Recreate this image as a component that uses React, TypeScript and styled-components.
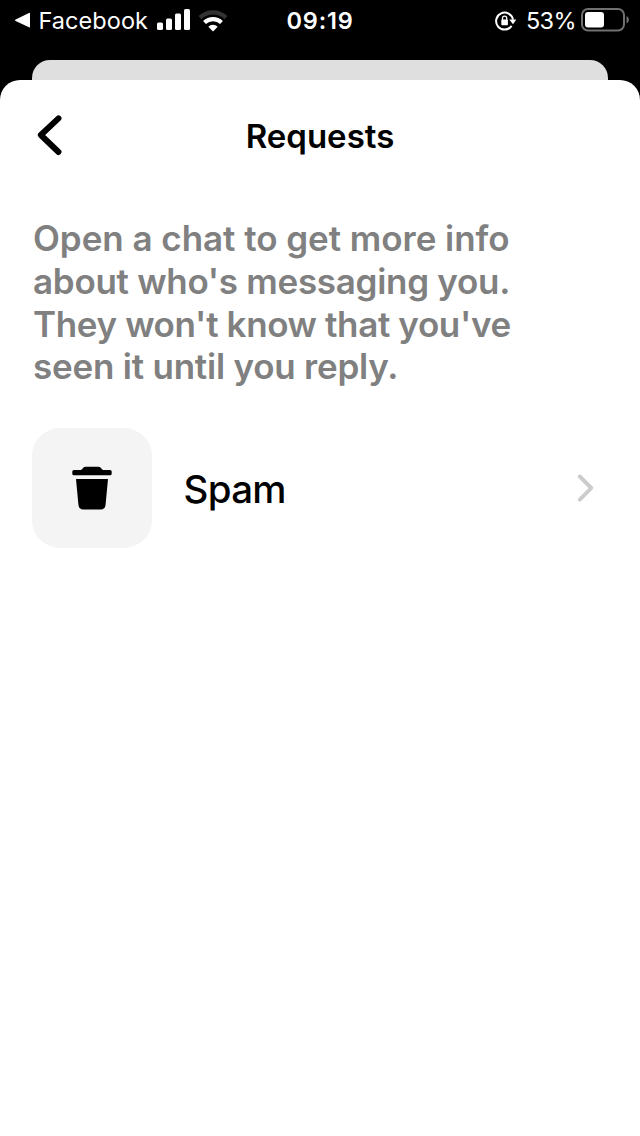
import React from "react";
import styled, { createGlobalStyle } from "styled-components";

const GlobalStyle = createGlobalStyle`
  * { box-sizing: border-box; }
  body { margin: 0; background: #000; font-family: Inter, "Liberation Sans", sans-serif; }
  svg { display: block; flex: none; }
`;

const Screen = styled.div`
  width: 640px;
  height: 1136px;
  display: flex;
  flex-direction: column;
  background: #000;
  overflow: hidden;
`;

const StatusBar = styled.header`
  height: 40px;
  flex: none;
  display: grid;
  grid-template-columns: 1fr auto 1fr;
  align-items: center;
  padding: 0 11px 0 14px;
  color: #fff;
`;

const StatusGroup = styled.div<{ $end?: boolean }>`
  display: flex;
  align-items: center;
  justify-content: ${(p) => (p.$end ? "flex-end" : "flex-start")};
`;

const StatusText = styled.span<{ $weight?: number; $spacing?: number; $margin?: string }>`
  font-size: 23.5px;
  line-height: 38px;
  padding-top: 2px;
  font-weight: ${(p) => p.$weight ?? 400};
  letter-spacing: ${(p) => p.$spacing ?? 0}px;
  margin: ${(p) => p.$margin ?? "0"};
  white-space: nowrap;
`;

const StatusIconSlot = styled.div<{ $left?: number }>`
  margin-left: ${(p) => p.$left ?? 0}px;
  padding-top: 1px;
`;

const PreviousSheet = styled.div`
  height: 20px;
  flex: none;
  margin: 20px 32px 0;
  border-radius: 18px 18px 0 0;
  background: #dfdfdf;
`;

const Sheet = styled.main`
  flex: 1;
  background: #fff;
  border-radius: 20px 20px 0 0;
  padding: 0 32px;
`;

const TitleBar = styled.div`
  height: 112px;
  display: grid;
  grid-template-columns: 48px 1fr 48px;
  align-items: center;
`;

const IconButton = styled.button`
  border: 0;
  padding: 0;
  background: none;
  width: 40px;
  height: 48px;
`;

const Title = styled.h1`
  margin: 0;
  text-align: center;
  font-size: 33px;
  line-height: 40px;
  font-weight: 600;
  letter-spacing: 0;
  color: #000;
`;

const Notice = styled.p`
  margin: 25px 0 0 1px;
  height: 172px;
  font-size: 35px;
  line-height: 42.8px;
  font-weight: 600;
  color: #808080;
`;

const Line = styled.span<{ $spacing: number }>`
  display: block;
  white-space: nowrap;
  letter-spacing: ${(p) => p.$spacing}px;
`;

const Row = styled.div`
  margin-top: 39px;
  height: 120px;
  display: flex;
  align-items: center;
  padding-right: 12px;
`;

const Tile = styled.div`
  width: 120px;
  height: 120px;
  border-radius: 28px;
  background: #f4f4f4;
  display: flex;
  align-items: center;
  justify-content: center;
`;

const RowLabel = styled.span`
  flex: 1;
  margin-left: 31.5px;
  padding-top: 1px;
  font-size: 38.5px;
  line-height: 48px;
  font-weight: 500;
  letter-spacing: -0.7px;
  color: #000;
`;

const BackTriangle = () => (
  <svg width="17" height="16" viewBox="0 0 17 16">
    <path d="M16 1.4v13.400q0 1-1 .5L1.600 8.900q-1.300-.7 0-1.400L15 .9q1-.5 1 .5z" fill="#fff" />
  </svg>
);

const Signal = () => (
  <svg width="34" height="22" viewBox="0 0 34 22" fill="#fff">
    <rect x="0" y="13.5" width="6" height="7.5" rx="1.5" />
    <rect x="9" y="9.5" width="6" height="11.5" rx="1.5" />
    <rect x="18" y="4.5" width="6" height="16.5" rx="1.5" />
    <rect x="27" y="0" width="6" height="21" rx="1.5" />
  </svg>
);

const Wifi = () => (
  <svg width="30" height="22" viewBox="0 0 30 22" fill="none">
    <path d="M2 7.600A19 19 0 0 1 28 7.600" stroke="#333" strokeWidth="4.200" />
    <path d="M6.500 12.500A12.400 12.400 0 0 1 23.500 12.500" stroke="#fff" strokeWidth="4.200" />
    <path d="M15 21.500l-4.700-4.700a6.600 6.600 0 0 1 9.400 0z" fill="#fff" />
  </svg>
);

const RotationLock = () => (
  <svg width="22" height="20" viewBox="0 0 22 20" fill="none">
    <path d="M16.600 14.900A8.500 8.500 0 1 1 18 8.700" stroke="#fff" strokeWidth="2" />
    <path d="M14.300 8.500h7L18 13.300z" fill="#fff" />
    <rect x="6.300" y="8.400" width="6.600" height="5.800" rx=".7" fill="#fff" />
    <path d="M7.500 9V7.300a2.100 2.100 0 0 1 4.200 0V9" stroke="#fff" strokeWidth="1.300" />
  </svg>
);

const Battery = () => (
  <svg width="48" height="24" viewBox="0 0 48 24" fill="none">
    <rect x="1" y="1" width="42" height="21.5" rx="6" stroke="#707070" strokeWidth="2" />
    <rect x="4" y="4" width="19" height="15.5" rx="3" fill="#fff" />
    <path d="M45.5 8q2.5 1.2 2.5 3.8t-2.5 3.8z" fill="#707070" />
  </svg>
);

const BackChevron = () => (
  <svg width="40" height="48" viewBox="0 0 40 48" fill="none">
    <path d="M26.500 6.300L8.800 23L26.500 40" stroke="#000" strokeWidth="5.900" strokeLinecap="round" strokeLinejoin="round" />
  </svg>
);

const Trash = () => (
  <svg width="40" height="44" viewBox="0 0 40 44" fill="#000">
    <path d="M2 4h6.500Q10 4 11 2Q12 .7 14 .7h12Q28 .7 29 2Q30 4 31.500 4H38Q39.700 4 39.700 5.500V7.700Q39.700 9.300 38 9.300H2Q.3 9.300 .3 7.700V5.500Q.3 4 2 4z" />
    <path d="M4 13h32l-2.400 25.500Q33.200 43.500 28.500 43.500h-17Q6.800 43.500 6.400 38.500z" />
  </svg>
);

const Disclosure = () => (
  <svg width="20" height="30" viewBox="0 0 20 30" fill="none">
    <path d="M3.800 3.500L15.300 15L3.800 26.700" stroke="#ccc" strokeWidth="3.900" strokeLinecap="round" strokeLinejoin="round" />
  </svg>
);

const noticeLines = [
  { text: "Open a chat to get more info", spacing: -0.04 },
  { text: "about who's messaging you.", spacing: -0.28 },
  { text: "They won't know that you've", spacing: -0.37 },
  { text: "seen it until you reply.", spacing: -0.22 },
];

export default function App() {
  return (
    <>
      <GlobalStyle />
      <Screen>
        <StatusBar>
          <StatusGroup>
            <BackTriangle />
            <StatusText $margin="0 8.5px 0 7.5px" $spacing={0.05}>Facebook</StatusText>
            <Signal />
            <StatusIconSlot $left={7.5}><Wifi /></StatusIconSlot>
          </StatusGroup>
          <StatusText $weight={600} $spacing={0.8} $margin="0 3px 0 0">09:19</StatusText>
          <StatusGroup $end>
            <StatusIconSlot><RotationLock /></StatusIconSlot>
            <StatusText $margin="0 5px 0 9px" $spacing={-0.6}>53%</StatusText>
            <Battery />
          </StatusGroup>
        </StatusBar>
        <PreviousSheet />
        <Sheet>
          <TitleBar>
            <IconButton aria-label="Back"><BackChevron /></IconButton>
            <Title>Requests</Title>
          </TitleBar>
          <Notice>
            {noticeLines.map((line) => (
              <Line key={line.text} $spacing={line.spacing}>{line.text}</Line>
            ))}
          </Notice>
          <Row>
            <Tile><Trash /></Tile>
            <RowLabel>Spam</RowLabel>
            <Disclosure />
          </Row>
        </Sheet>
      </Screen>
    </>
  );
}
